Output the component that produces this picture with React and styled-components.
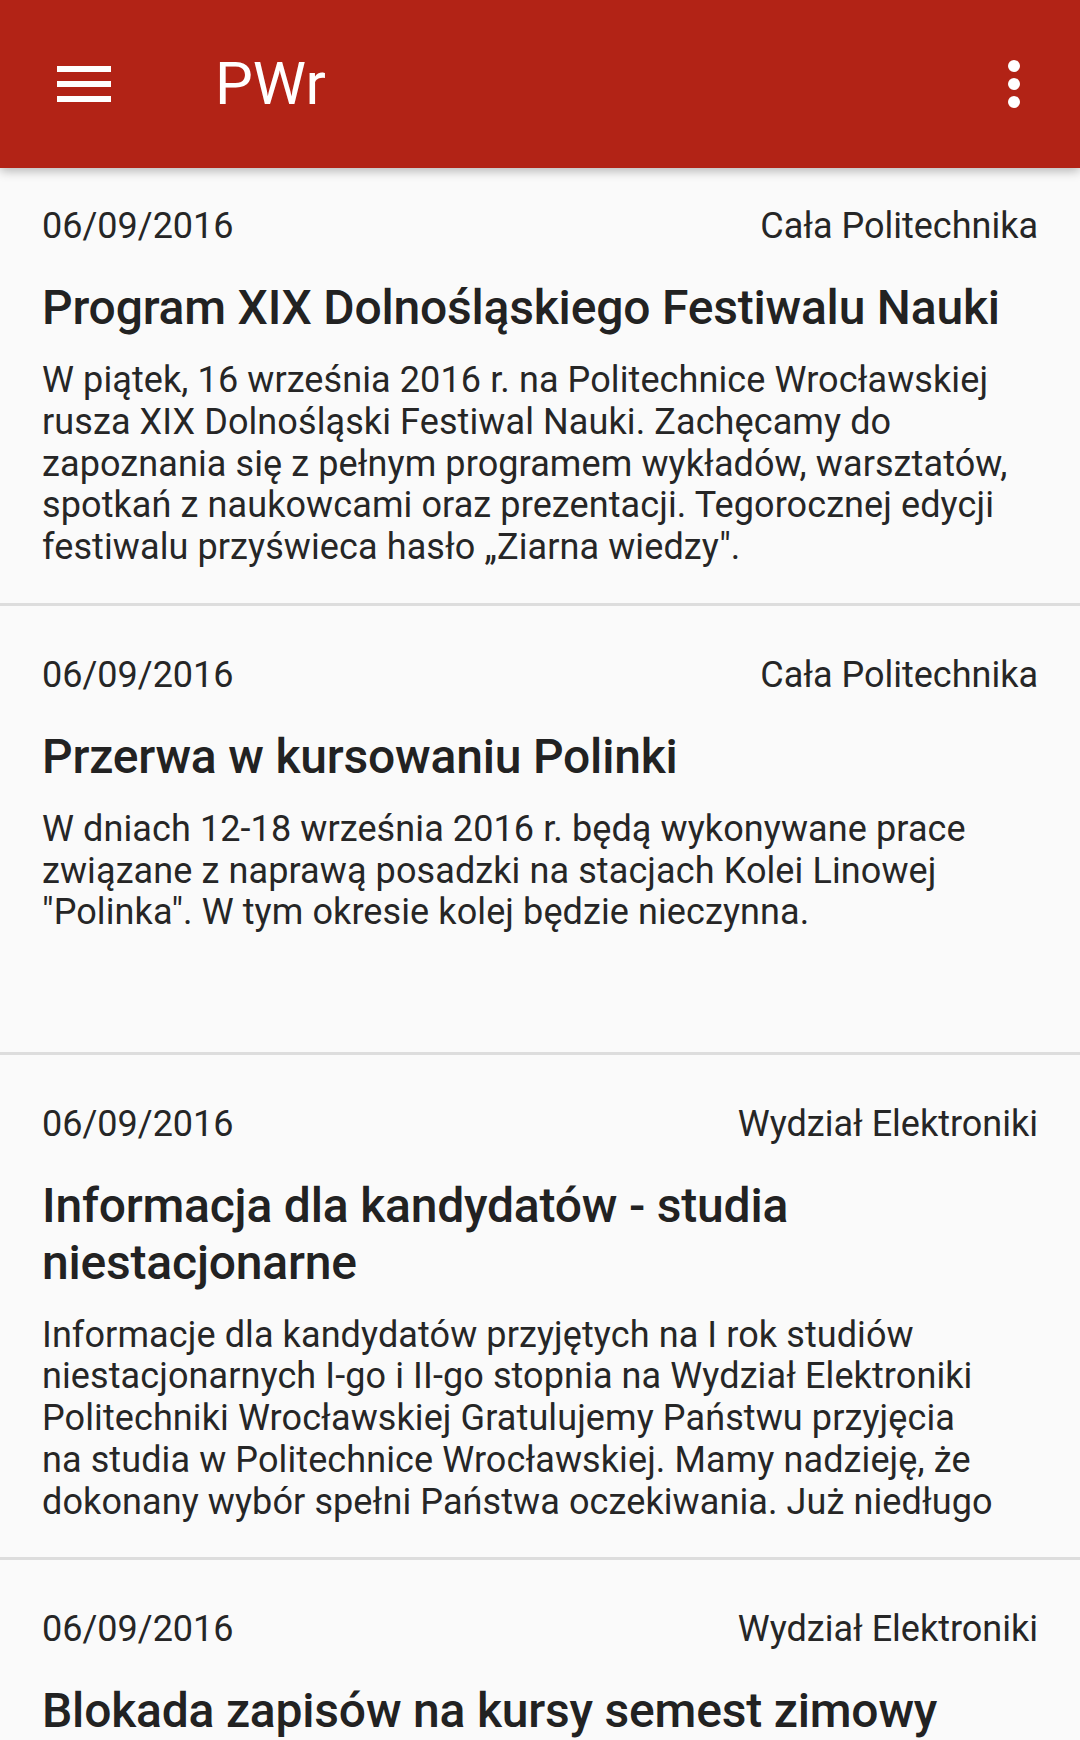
import React from "react";
import styled, { createGlobalStyle } from "styled-components";

const GlobalStyle = createGlobalStyle`
  html, body {
    margin: 0;
    padding: 0;
    background: #fafafa;
  }
  body {
    font-family: Roboto, "Noto Sans", sans-serif;
    -webkit-font-smoothing: antialiased;
  }
`;

const Screen = styled.div`
  width: 1080px;
  height: 1740px;
  overflow: hidden;
  background: #fafafa;
  display: flex;
  flex-direction: column;
`;

const Toolbar = styled.header`
  position: relative;
  z-index: 2;
  flex: none;
  height: 168px;
  background: #b22316;
  box-shadow: 0 3px 10px rgba(0, 0, 0, 0.28);
  display: flex;
  align-items: center;
  color: #fff;
`;

const NavButton = styled.div`
  width: 168px;
  height: 168px;
  display: flex;
  align-items: center;
  justify-content: center;
`;

const Title = styled.h1`
  flex: 1;
  margin: 0 0 0 47px;
  font-family: Roboto, sans-serif;
  font-weight: 400;
  font-size: 60px;
  line-height: 1;
  color: #fff;
`;

const OverflowButton = styled.div`
  width: 72px;
  height: 168px;
  margin-right: 30px;
  display: flex;
  align-items: center;
  justify-content: center;
`;

const List = styled.main`
  flex: 1;
  overflow: hidden;
`;

const Card = styled.article`
  padding: 48px 42px 34px;
  border-bottom: 3px solid #dddddd;

  &:first-child {
    padding-top: 37px;
  }
`;

const MetaRow = styled.div`
  display: flex;
  justify-content: space-between;
  align-items: baseline;
  font-size: 36px;
  line-height: 42px;
  color: #262626;
`;

const Headline = styled.h2`
  margin: 32px 0 24px;
  font-size: 48px;
  font-weight: 500;
  line-height: 57px;
  color: #222222;
  letter-spacing: -0.2px;
  white-space: pre-line;
`;

const Summary = styled.p`
  margin: 0;
  font-size: 36px;
  line-height: 41.75px;
  letter-spacing: 0.1px;
  min-height: 208.75px;
  color: #262626;
  white-space: pre-line;
`;

const MenuIcon = () => (
  <svg width="72" height="72" viewBox="0 0 24 24" fill="#fff">
    <path d="M3 18h18v-2H3v2zm0-5h18v-2H3v2zm0-7v2h18V6H3z" />
  </svg>
);

const MoreIcon = () => (
  <svg width="72" height="72" viewBox="0 0 24 24" fill="#fff">
    <circle cx="12" cy="6" r="2" />
    <circle cx="12" cy="12" r="2" />
    <circle cx="12" cy="18" r="2" />
  </svg>
);

const news = [
  {
    date: "06/09/2016",
    source: "Cała Politechnika",
    title: "Program XIX Dolnośląskiego Festiwalu Nauki",
    text:
      "W piątek, 16 września 2016 r. na Politechnice Wrocławskiej\nrusza XIX Dolnośląski Festiwal Nauki. Zachęcamy do\nzapoznania się z pełnym programem wykładów, warsztatów,\nspotkań z naukowcami oraz prezentacji. Tegorocznej edycji\nfestiwalu przyświeca hasło „Ziarna wiedzy\"."
  },
  {
    date: "06/09/2016",
    source: "Cała Politechnika",
    title: "Przerwa w kursowaniu Polinki",
    text:
      "W dniach 12-18 września 2016 r. będą wykonywane prace\nzwiązane z naprawą posadzki na stacjach Kolei Linowej\n\"Polinka\". W tym okresie kolej będzie nieczynna."
  },
  {
    date: "06/09/2016",
    source: "Wydział Elektroniki",
    title: "Informacja dla kandydatów - studia\nniestacjonarne",
    text:
      "Informacje dla kandydatów przyjętych na I rok studiów\nniestacjonarnych I-go i II-go stopnia na Wydział Elektroniki\nPolitechniki Wrocławskiej Gratulujemy Państwu przyjęcia\nna studia w Politechnice Wrocławskiej. Mamy nadzieję, że\ndokonany wybór spełni Państwa oczekiwania. Już niedługo"
  },
  {
    date: "06/09/2016",
    source: "Wydział Elektroniki",
    title: "Blokada zapisów na kursy semest zimowy",
    text: ""
  }
];

function NewsCard({ item }) {
  return (
    <Card>
      <MetaRow>
        <span>{item.date}</span>
        <span>{item.source}</span>
      </MetaRow>
      <Headline>{item.title}</Headline>
      <Summary>{item.text}</Summary>
    </Card>
  );
}

export default function App() {
  return (
    <>
      <GlobalStyle />
      <Screen>
        <Toolbar>
          <NavButton>
            <MenuIcon />
          </NavButton>
          <Title>PWr</Title>
          <OverflowButton>
            <MoreIcon />
          </OverflowButton>
        </Toolbar>
        <List>
          {news.map((item, i) => (
            <NewsCard key={i} item={item} />
          ))}
        </List>
      </Screen>
    </>
  );
}
